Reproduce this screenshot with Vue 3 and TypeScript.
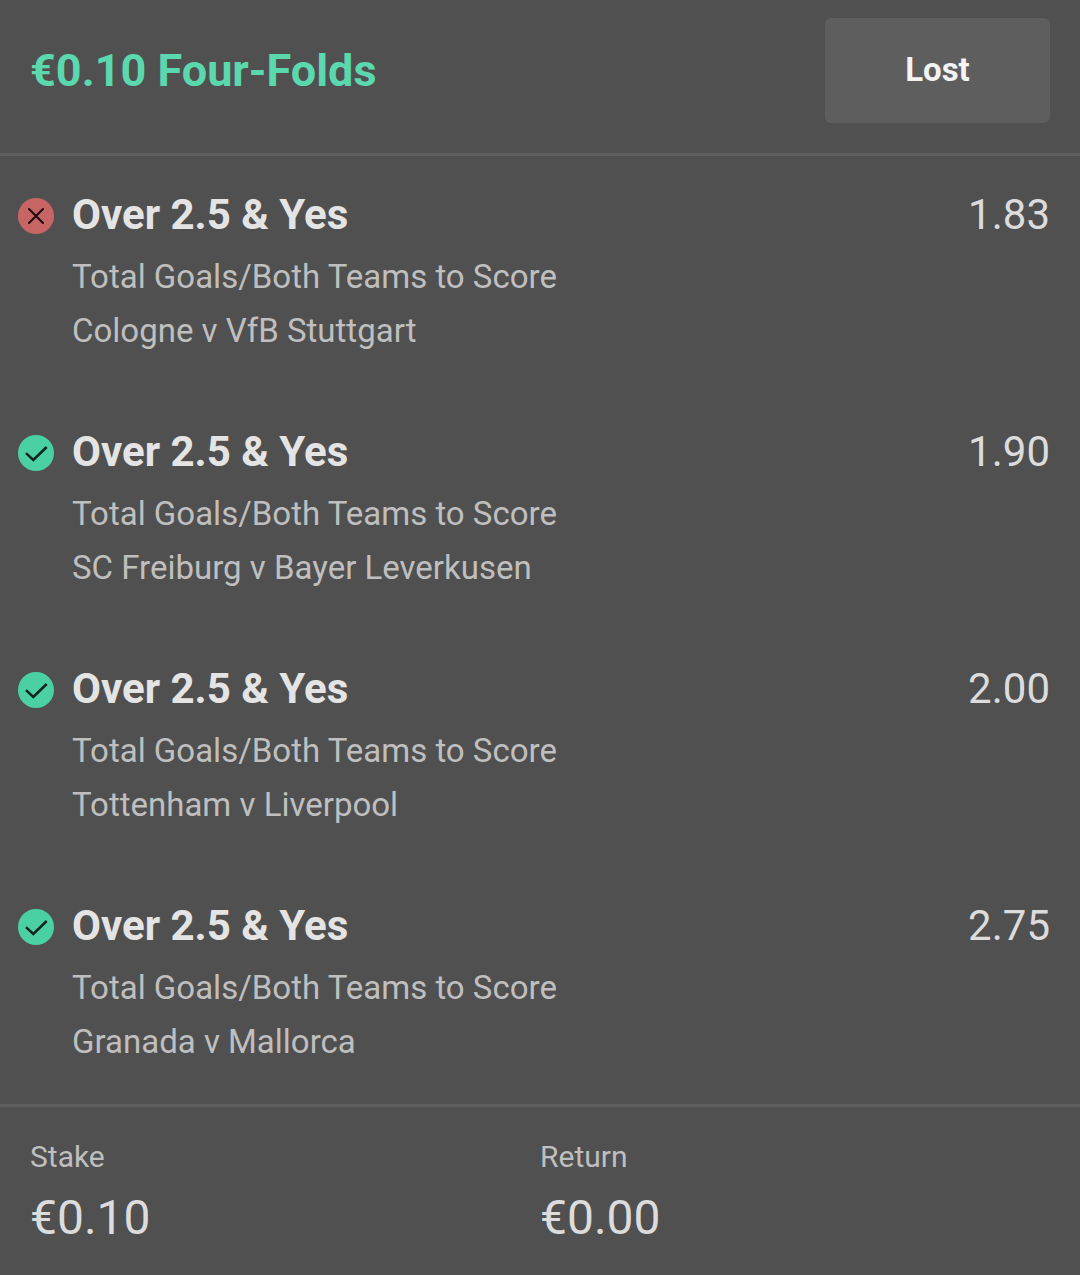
<script setup lang="ts">
interface Selection {
  won: boolean
  pick: string
  market: string
  fixture: string
  odds: string
}

const market = 'Total Goals/Both Teams to Score'
const selections: Selection[] = [
  { won: false, pick: 'Over 2.5 & Yes', market, fixture: 'Cologne v VfB Stuttgart', odds: '1.83' },
  { won: true, pick: 'Over 2.5 & Yes', market, fixture: 'SC Freiburg v Bayer Leverkusen', odds: '1.90' },
  { won: true, pick: 'Over 2.5 & Yes', market, fixture: 'Tottenham v Liverpool', odds: '2.00' },
  { won: true, pick: 'Over 2.5 & Yes', market, fixture: 'Granada v Mallorca', odds: '2.75' },
]
</script>

<template>
  <main class="slip">
    <header class="head">
      <h1 class="title">€0.10 Four-Folds</h1>
      <button class="status" type="button">Lost</button>
    </header>

    <ul class="selections">
      <li v-for="item in selections" :key="item.fixture" class="selection">
        <svg class="mark" viewBox="0 0 36 36" role="img" :aria-label="item.won ? 'Won' : 'Lost'">
          <circle cx="18" cy="18" r="18" :class="item.won ? 'won' : 'lost'" />
          <path v-if="item.won" class="tick" d="M8 18.2 15.3 25 28.7 12" />
          <path v-else class="cross" d="M11 11 25 25M25 11 11 25" />
        </svg>
        <div class="details">
          <h2 class="pick">{{ item.pick }}</h2>
          <p class="line">{{ item.market }}</p>
          <p class="line">{{ item.fixture }}</p>
        </div>
        <span class="odds">{{ item.odds }}</span>
      </li>
    </ul>

    <dl class="totals">
      <div class="total">
        <dt class="label">Stake</dt>
        <dd class="amount">€0.10</dd>
      </div>
      <div class="total">
        <dt class="label">Return</dt>
        <dd class="amount">€0.00</dd>
      </div>
    </dl>
  </main>
</template>

<style>
body {
  margin: 0;
  background: #505050;
}
</style>

<style scoped>
.slip {
  font-family: Roboto, sans-serif;
  color: #e4e4e4;
  background: #505050;
}

h1,
h2,
p,
ul,
dl,
dd {
  margin: 0;
  padding: 0;
}

.head {
  display: flex;
  justify-content: space-between;
  align-items: flex-start;
  padding: 18px 30px 30px;
  border-bottom: 3px solid #5f5f5f;
}

.title {
  font-size: 45px;
  line-height: 105px;
  font-weight: 700;
  color: #5bd8ae;
}

.status {
  width: 225px;
  height: 105px;
  padding: 0 0 2px;
  border: 0;
  border-radius: 6px;
  background: #5e5e5e;
  color: #f3f3f3;
  font-family: inherit;
  font-size: 33px;
  font-weight: 700;
}

.selections {
  list-style: none;
}

.selection {
  display: flex;
  align-items: flex-start;
  gap: 18px;
  padding: 30px 30px 35px 18px;
}

.mark {
  flex: none;
  width: 36px;
  height: 36px;
  margin-top: 12px;
}

.won {
  fill: #4bd0a3;
}

.lost {
  fill: #c76565;
}

.tick,
.cross {
  fill: none;
  stroke: #12261f;
  stroke-width: 2.5;
}

.cross {
  stroke: #1c0c0c;
  stroke-width: 2;
  stroke-linecap: round;
}

.details {
  flex: 1;
}

.pick {
  font-size: 42px;
  line-height: 58px;
  font-weight: 700;
}

.line {
  font-size: 33px;
  line-height: 54px;
  color: #bfbfbf;
}

.pick + .line {
  padding-top: 6px;
}

.odds {
  font-size: 42px;
  line-height: 58px;
  color: #dcdcdc;
}

.totals {
  display: grid;
  grid-template-columns: 1fr 1fr;
  padding: 30px 30px 20px;
  border-top: 3px solid #5f5f5f;
}

.label {
  font-size: 30px;
  line-height: 40px;
  color: #bfbfbf;
}

.amount {
  padding-top: 5px;
  font-size: 48px;
  line-height: 72px;
  color: #dcdcdc;
}
</style>
